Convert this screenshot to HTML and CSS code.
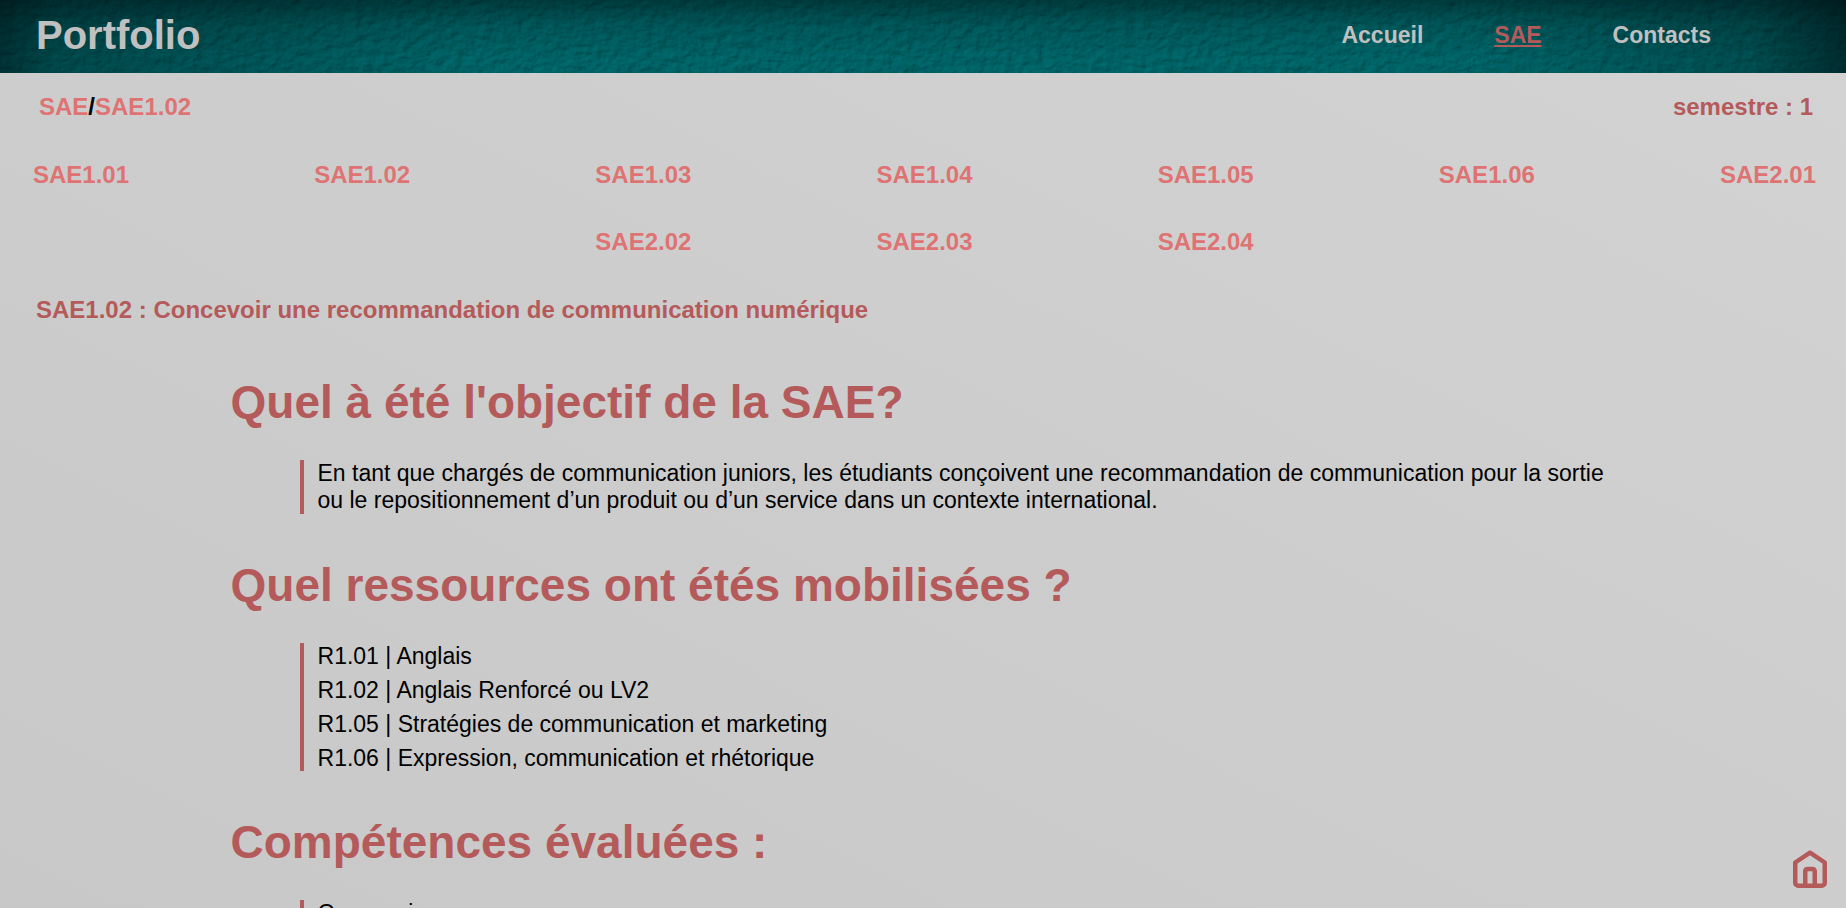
FILE: index.html
```html
<!DOCTYPE html>
<html lang="fr">
<head>
<meta charset="utf-8">
<meta name="viewport" content="width=device-width, initial-scale=1">
<title>Portfolio - SAE1.02</title>
<link rel="stylesheet" href="styles.css">
</head>
<body>
<header class="site-header">
  <svg class="texture" aria-hidden="true" width="100%" height="100%">
    <filter id="plaster" x="0" y="0" width="100%" height="100%" color-interpolation-filters="sRGB">
      <feTurbulence type="fractalNoise" baseFrequency="0.1 0.13" numOctaves="3" seed="21" result="noise"/>
      <feDiffuseLighting in="noise" surfaceScale="1.2" diffuseConstant="1.05" lighting-color="#00696c">
        <feDistantLight azimuth="225" elevation="62"/>
      </feDiffuseLighting>
    </filter>
    <rect width="100%" height="100%" filter="url(#plaster)"/>
  </svg>
  <a class="brand" href="#">Portfolio</a>
  <nav class="menu">
    <a href="#">Accueil</a>
    <a class="current" href="#" aria-current="page">SAE</a>
    <a href="#">Contacts</a>
  </nav>
</header>
<main>
  <div class="trail">
    <nav class="crumbs"><a href="#">SAE</a>/<a href="#">SAE1.02</a></nav>
    <p class="term">semestre : 1</p>
  </div>
  <nav class="sae-list">
    <a href="#">SAE1.01</a>
    <a href="#">SAE1.02</a>
    <a href="#">SAE1.03</a>
    <a href="#">SAE1.04</a>
    <a href="#">SAE1.05</a>
    <a href="#">SAE1.06</a>
    <a href="#">SAE2.01</a>
    <a class="second-row" href="#">SAE2.02</a>
    <a href="#">SAE2.03</a>
    <a href="#">SAE2.04</a>
  </nav>
  <h1 class="title">SAE1.02 : Concevoir une recommandation de communication numérique</h1>
  <article class="content">
    <h2>Quel à été l'objectif de la SAE?</h2>
    <p class="quote">En tant que chargés de communication juniors, les étudiants conçoivent une recommandation de communication pour la sortie ou le repositionnement d’un produit ou d’un service dans un contexte international.</p>
    <h2>Quel ressources ont étés mobilisées ?</h2>
    <ul class="quote">
      <li>R1.01 | Anglais</li>
      <li>R1.02 | Anglais Renforcé ou LV2</li>
      <li>R1.05 | Stratégies de communication et marketing</li>
      <li>R1.06 | Expression, communication et rhétorique</li>
    </ul>
    <h2>Compétences évaluées :</h2>
    <ul class="quote">
      <li>Concevoir</li>
    </ul>
  </article>
</main>
<a class="home" href="#" aria-label="Accueil">
  <svg viewBox="0 0 34 38" fill="none" stroke="currentColor" stroke-width="4.500" stroke-linejoin="round">
    <path d="M2.250 12.500 17 2.700 31.750 12.500V33a3 3 0 0 1-3 2.750H5.250a3 3 0 0 1-3-2.750Z"/>
    <path d="M12.250 36V21a2 2 0 0 1 2-2h5.500a2 2 0 0 1 2 2v15"/>
  </svg>
</a>
</body>
</html>
```
FILE: styles.css
```css
* {
  box-sizing: border-box;
}

html {
  height: 100%;
  overflow: hidden;
}

body {
  height: 100%;
  margin: 0;
  overflow: hidden;
  font: 24px/27px "Liberation Sans", Arial, sans-serif;
  color: #000;
  background: linear-gradient(to top right, #c8c8c8, #cdcdcd 50%, #d3d3d3);
}

a {
  color: #df7373;
  text-decoration: none;
}

.site-header {
  position: relative;
  display: flex;
  align-items: center;
  justify-content: space-between;
  padding: 12px 135px 15px 36px;
  background: #005c60;
  font-weight: bold;
}

.site-header a {
  position: relative;
  color: #c0c0c0;
}

.texture {
  position: absolute;
  inset: 0;
}

.site-header::before {
  content: "";
  position: absolute;
  inset: 0;
  z-index: 1;
  background:
    linear-gradient(to right, rgba(0, 8, 10, 0.55), rgba(0, 8, 10, 0.3) 3%, transparent 26%, transparent 80%, rgba(0, 8, 10, 0.25) 95%, rgba(0, 8, 10, 0.6)),
    linear-gradient(rgba(0, 8, 10, 0.45), rgba(0, 8, 10, 0.15) 35%, transparent 80%);
}

.brand,
.menu {
  z-index: 2;
}

.brand {
  font-size: 40px;
  line-height: 46px;
}

.menu {
  display: flex;
  gap: 71px;
  font-size: 23px;
}

.site-header .current {
  color: #b55a5a;
  text-decoration: underline;
}

.trail {
  display: flex;
  justify-content: space-between;
  padding: 20px 33px 0 39px;
  font-weight: bold;
}

.term {
  margin: 0;
  color: #b55a5a;
}

.sae-list {
  display: grid;
  grid-template-columns: repeat(7, max-content);
  justify-content: space-between;
  row-gap: 40px;
  padding: 41px 30px 0 33px;
  font-weight: bold;
}

.second-row {
  grid-column: 3;
}

.title {
  margin: 0;
  padding: 41px 36px 0;
  font-size: 24px;
  color: #b55a5a;
}

.content {
  margin: 52px 12% 0;
  padding: 0 9px;
  font-size: 23px;
}

.content h2 {
  margin: 0;
  font-size: 46px;
  line-height: 55px;
  color: #b55a5a;
}

.quote {
  margin: 30px 0 44px 69px;
  padding: 0 0 0 14px;
  border-left: 4px solid #b55a5a;
  list-style: none;
}

.quote li {
  line-height: 26px;
}

.quote li + li {
  margin-top: 8px;
}

.home {
  position: fixed;
  right: 19px;
  bottom: 20px;
  display: flex;
  color: #b55a5a;
}

.home svg {
  width: 34px;
  height: 38px;
}
```
